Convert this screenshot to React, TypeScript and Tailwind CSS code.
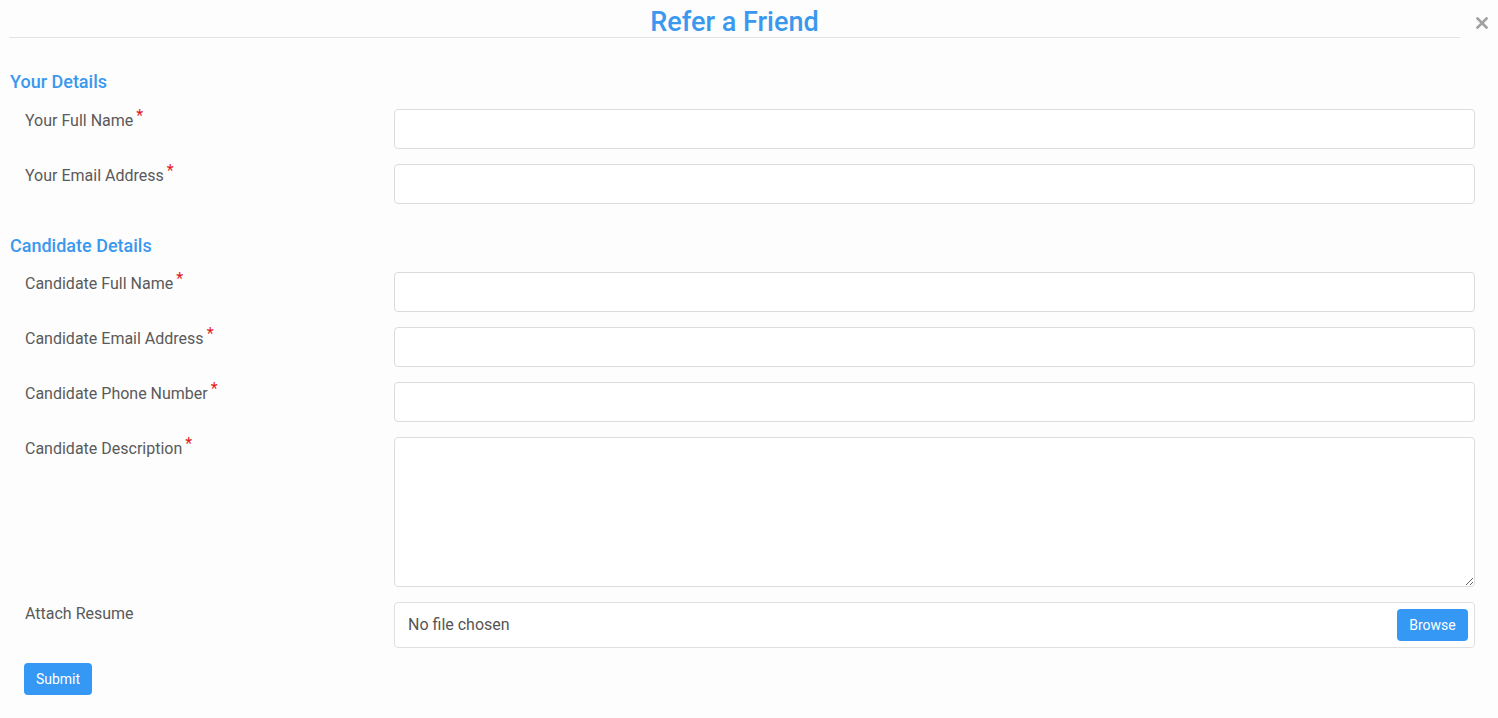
import { useState } from "react";

const FONT = { fontFamily: "Roboto, 'Liberation Sans', sans-serif" };

type Field = { label: string; required?: boolean; kind?: "text" | "textarea" | "file" };

const YOU: Field[] = [
  { label: "Your Full Name", required: true },
  { label: "Your Email Address", required: true },
];

const CANDIDATE: Field[] = [
  { label: "Candidate Full Name", required: true },
  { label: "Candidate Email Address", required: true },
  { label: "Candidate Phone Number", required: true },
  { label: "Candidate Description", required: true, kind: "textarea" },
  { label: "Attach Resume", kind: "file" },
];

function Row({ field }: { field: Field }) {
  const [val, setVal] = useState("");
  return (
    <div className="mb-[15px] flex">
      <label className="w-[370px] shrink-0 pt-[1px] pl-[1px] text-[16px] leading-[22px] text-[#5a5a5a]">
        {field.label}
        {field.required && (
          <span className="relative -top-[5px] ml-[3px] text-[16px] text-[#e01b1b]">*</span>
        )}
      </label>
      {field.kind === "textarea" ? (
        <textarea
          value={val}
          onChange={(e) => setVal(e.target.value)}
          className="block h-[150px] flex-1 rounded-[4px] border border-[#dcdcdc] bg-white px-3 py-2 text-[16px] text-[#555] outline-none"
        />
      ) : field.kind === "file" ? (
        <div className="flex h-[46px] flex-1 items-center justify-between rounded-[4px] border border-[#e0e0e0] bg-white pl-[13px] pr-[6px]">
          <span className="text-[16px] text-[#555]">No file chosen</span>
          <button className="h-[32px] w-[71px] rounded-[4px] bg-[#3598f5] text-[14px] text-white">
            Browse
          </button>
        </div>
      ) : (
        <input
          value={val}
          onChange={(e) => setVal(e.target.value)}
          className="block h-[40px] flex-1 rounded-[4px] border border-[#dcdcdc] bg-white px-3 text-[16px] text-[#555] outline-none"
        />
      )}
    </div>
  );
}

export default function App() {
  return (
    <div style={FONT} className="min-h-[718px] w-full bg-[#fdfdfd]">
      <div className="flex items-start">
        <div className="ml-[9px] h-[38px] w-[1451px] border-b border-[#e3e3e3] text-center">
          <h1 className="pt-[4px] text-[27px] leading-[36px] font-medium text-[#3a98ee]">
            Refer a Friend
          </h1>
        </div>
        <button aria-label="Close" className="ml-[16px] mt-[17px] text-[#a0a0a0]">
          <svg width="12" height="12" viewBox="0 0 12 12">
            <path d="M1.5 1.5 L10.5 10.5 M10.5 1.5 L1.5 10.5" stroke="currentColor" strokeWidth="2.6" strokeLinecap="square" />
          </svg>
        </button>
      </div>

      <form className="pr-[23px]" onSubmit={(e) => e.preventDefault()}>
        <h2 className="mt-[32px] pl-[10px] text-[18px] leading-[24px] font-medium text-[#3a98ee]">
          Your Details
        </h2>
        <div className="mt-[15px] pl-[24px]">
          {YOU.map((f) => (
            <Row key={f.label} field={f} />
          ))}
        </div>

        <h2 className="mt-[30px] pl-[10px] text-[18px] leading-[24px] font-medium text-[#3a98ee]">
          Candidate Details
        </h2>
        <div className="mt-[14px] pl-[24px]">
          {CANDIDATE.map((f) => (
            <Row key={f.label} field={f} />
          ))}
          <button className="h-[32px] w-[68px] rounded-[4px] bg-[#3598f5] text-[14px] text-white">
            Submit
          </button>
        </div>
      </form>
    </div>
  );
}
